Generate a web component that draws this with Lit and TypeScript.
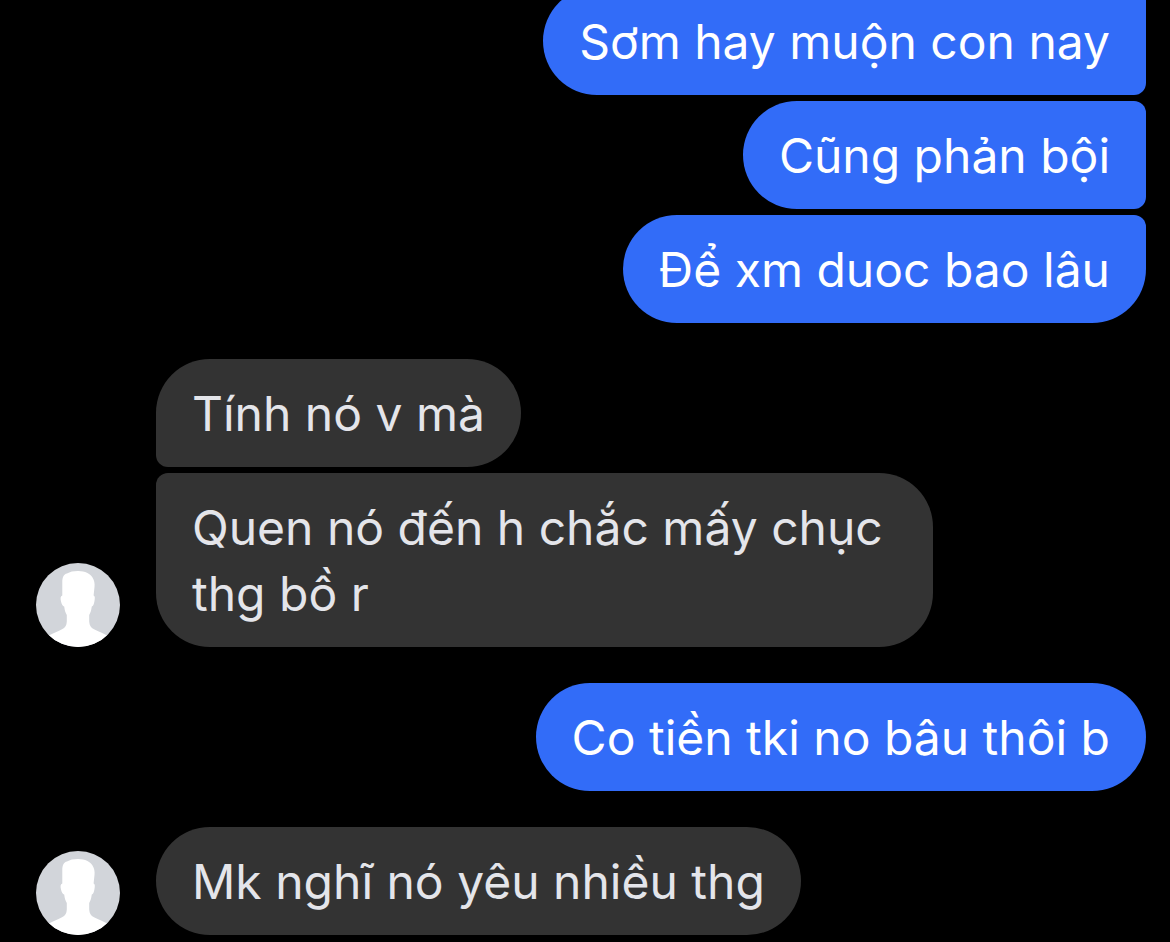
import { LitElement, html, css } from "lit";
import { customElement, property } from "lit/decorators.js";
import { classMap } from "lit/directives/class-map.js";

interface Group {
  from: "me" | "them";
  texts: string[];
  continued?: boolean;
}

const conversation: Group[] = [
  {
    from: "me",
    texts: ["Sơm hay muộn con nay", "Cũng phản bội", "Để xm duoc bao lâu"],
    continued: true,
  },
  { from: "them", texts: ["Tính nó v mà", "Quen nó đến h chắc mấy chục thg bồ r"] },
  { from: "me", texts: ["Co tiền tki no bâu thôi b"] },
  { from: "them", texts: ["Mk nghĩ nó yêu nhiều thg"] },
];

@customElement("user-avatar")
export class UserAvatar extends LitElement {
  static styles = css`
    :host {
      display: block;
      flex: none;
      width: 84px;
      height: 84px;
      border-radius: 50%;
      overflow: hidden;
      background: #d2d5da;
    }
    .silhouette {
      display: block;
      width: 100%;
      height: 100%;
    }
  `;

  render() {
    return html`
      <svg class="silhouette" viewBox="0 0 84 84" aria-hidden="true">
        <path
          fill="#fff"
          d="M26.3 32.5V19.5C26.2 14.5 27.8 11.2 31 10.6C34 8.6 38 7.9 42.5 8C49 8.2 54 10.6 56.5 14.5C58.3 17.5 58.9 20.5 58.5 24L57.6 32.5C59.2 33 59 35.5 58.4 38.5C57.8 41.5 57.2 43.2 55.8 43.6C55.2 47.500 54.500 50 53.200 52V58.500C53.500 62.500 54.800 64.600 58 66.200C63 68.500 67.500 70.400 71 72.600V84H13V72.600C16.500 70.400 21.500 68.500 26 66.200C29.200 64.600 30.600 62.500 30.800 58.500V52C29.500 50 28.700 47.500 28.200 43.600C26.500 43.200 25.600 41 25 38.500C24.200 35.300 24.400 33 26.300 32.500Z"
        />
      </svg>
    `;
  }
}

@customElement("message-group")
export class MessageGroup extends LitElement {
  @property() from: "me" | "them" = "me";
  @property({ attribute: false }) texts: string[] = [];
  @property({ type: Boolean }) continued = false;

  static styles = css`
    :host {
      display: block;
      flex: none;
    }
    .group {
      display: flex;
      align-items: flex-end;
      gap: 36px;
    }
    .group.me {
      justify-content: flex-end;
    }
    .stack {
      display: flex;
      flex-direction: column;
      align-items: flex-start;
      gap: 6px;
      max-width: 70%;
    }
    .me .stack {
      align-items: flex-end;
    }
    .bubble {
      box-sizing: border-box;
      max-width: 100%;
      margin: 0;
      padding: 22px 36px 20px;
      border-radius: 54px;
      background: #333333;
      color: #e4e5ea;
      overflow-wrap: break-word;
    }
    .me .bubble {
      background: #326cf8;
      color: #ffffff;
    }
    .them .bubble:not(:first-child) {
      border-top-left-radius: 12px;
    }
    .them .bubble:not(:last-child) {
      border-bottom-left-radius: 12px;
    }
    .me .bubble:not(:first-child),
    .me.continued .bubble {
      border-top-right-radius: 12px;
    }
    .me .bubble:not(:last-child) {
      border-bottom-right-radius: 12px;
    }
  `;

  render() {
    const incoming = this.from === "them";
    const classes = { group: true, me: !incoming, them: incoming, continued: this.continued };
    return html`
      <div class=${classMap(classes)}>
        ${incoming ? html`<user-avatar></user-avatar>` : null}
        <div class="stack">${this.texts.map((text) => html`<p class="bubble">${text}</p>`)}</div>
      </div>
    `;
  }
}

@customElement("app-root")
export class AppRoot extends LitElement {
  static styles = css`
    :host {
      display: block;
      background: #000000;
    }
    .thread {
      box-sizing: border-box;
      display: flex;
      flex-direction: column;
      justify-content: flex-end;
      gap: 36px;
      height: 100vh;
      padding: 0 24px 7px 36px;
      overflow: hidden;
      font-family: Inter, "Noto Sans", sans-serif;
      font-size: 48px;
      line-height: 66px;
    }
  `;

  render() {
    return html`
      <main class="thread">
        ${conversation.map(
          (group) => html`
            <message-group
              .from=${group.from}
              .texts=${group.texts}
              .continued=${group.continued ?? false}
            ></message-group>
          `
        )}
      </main>
    `;
  }
}
